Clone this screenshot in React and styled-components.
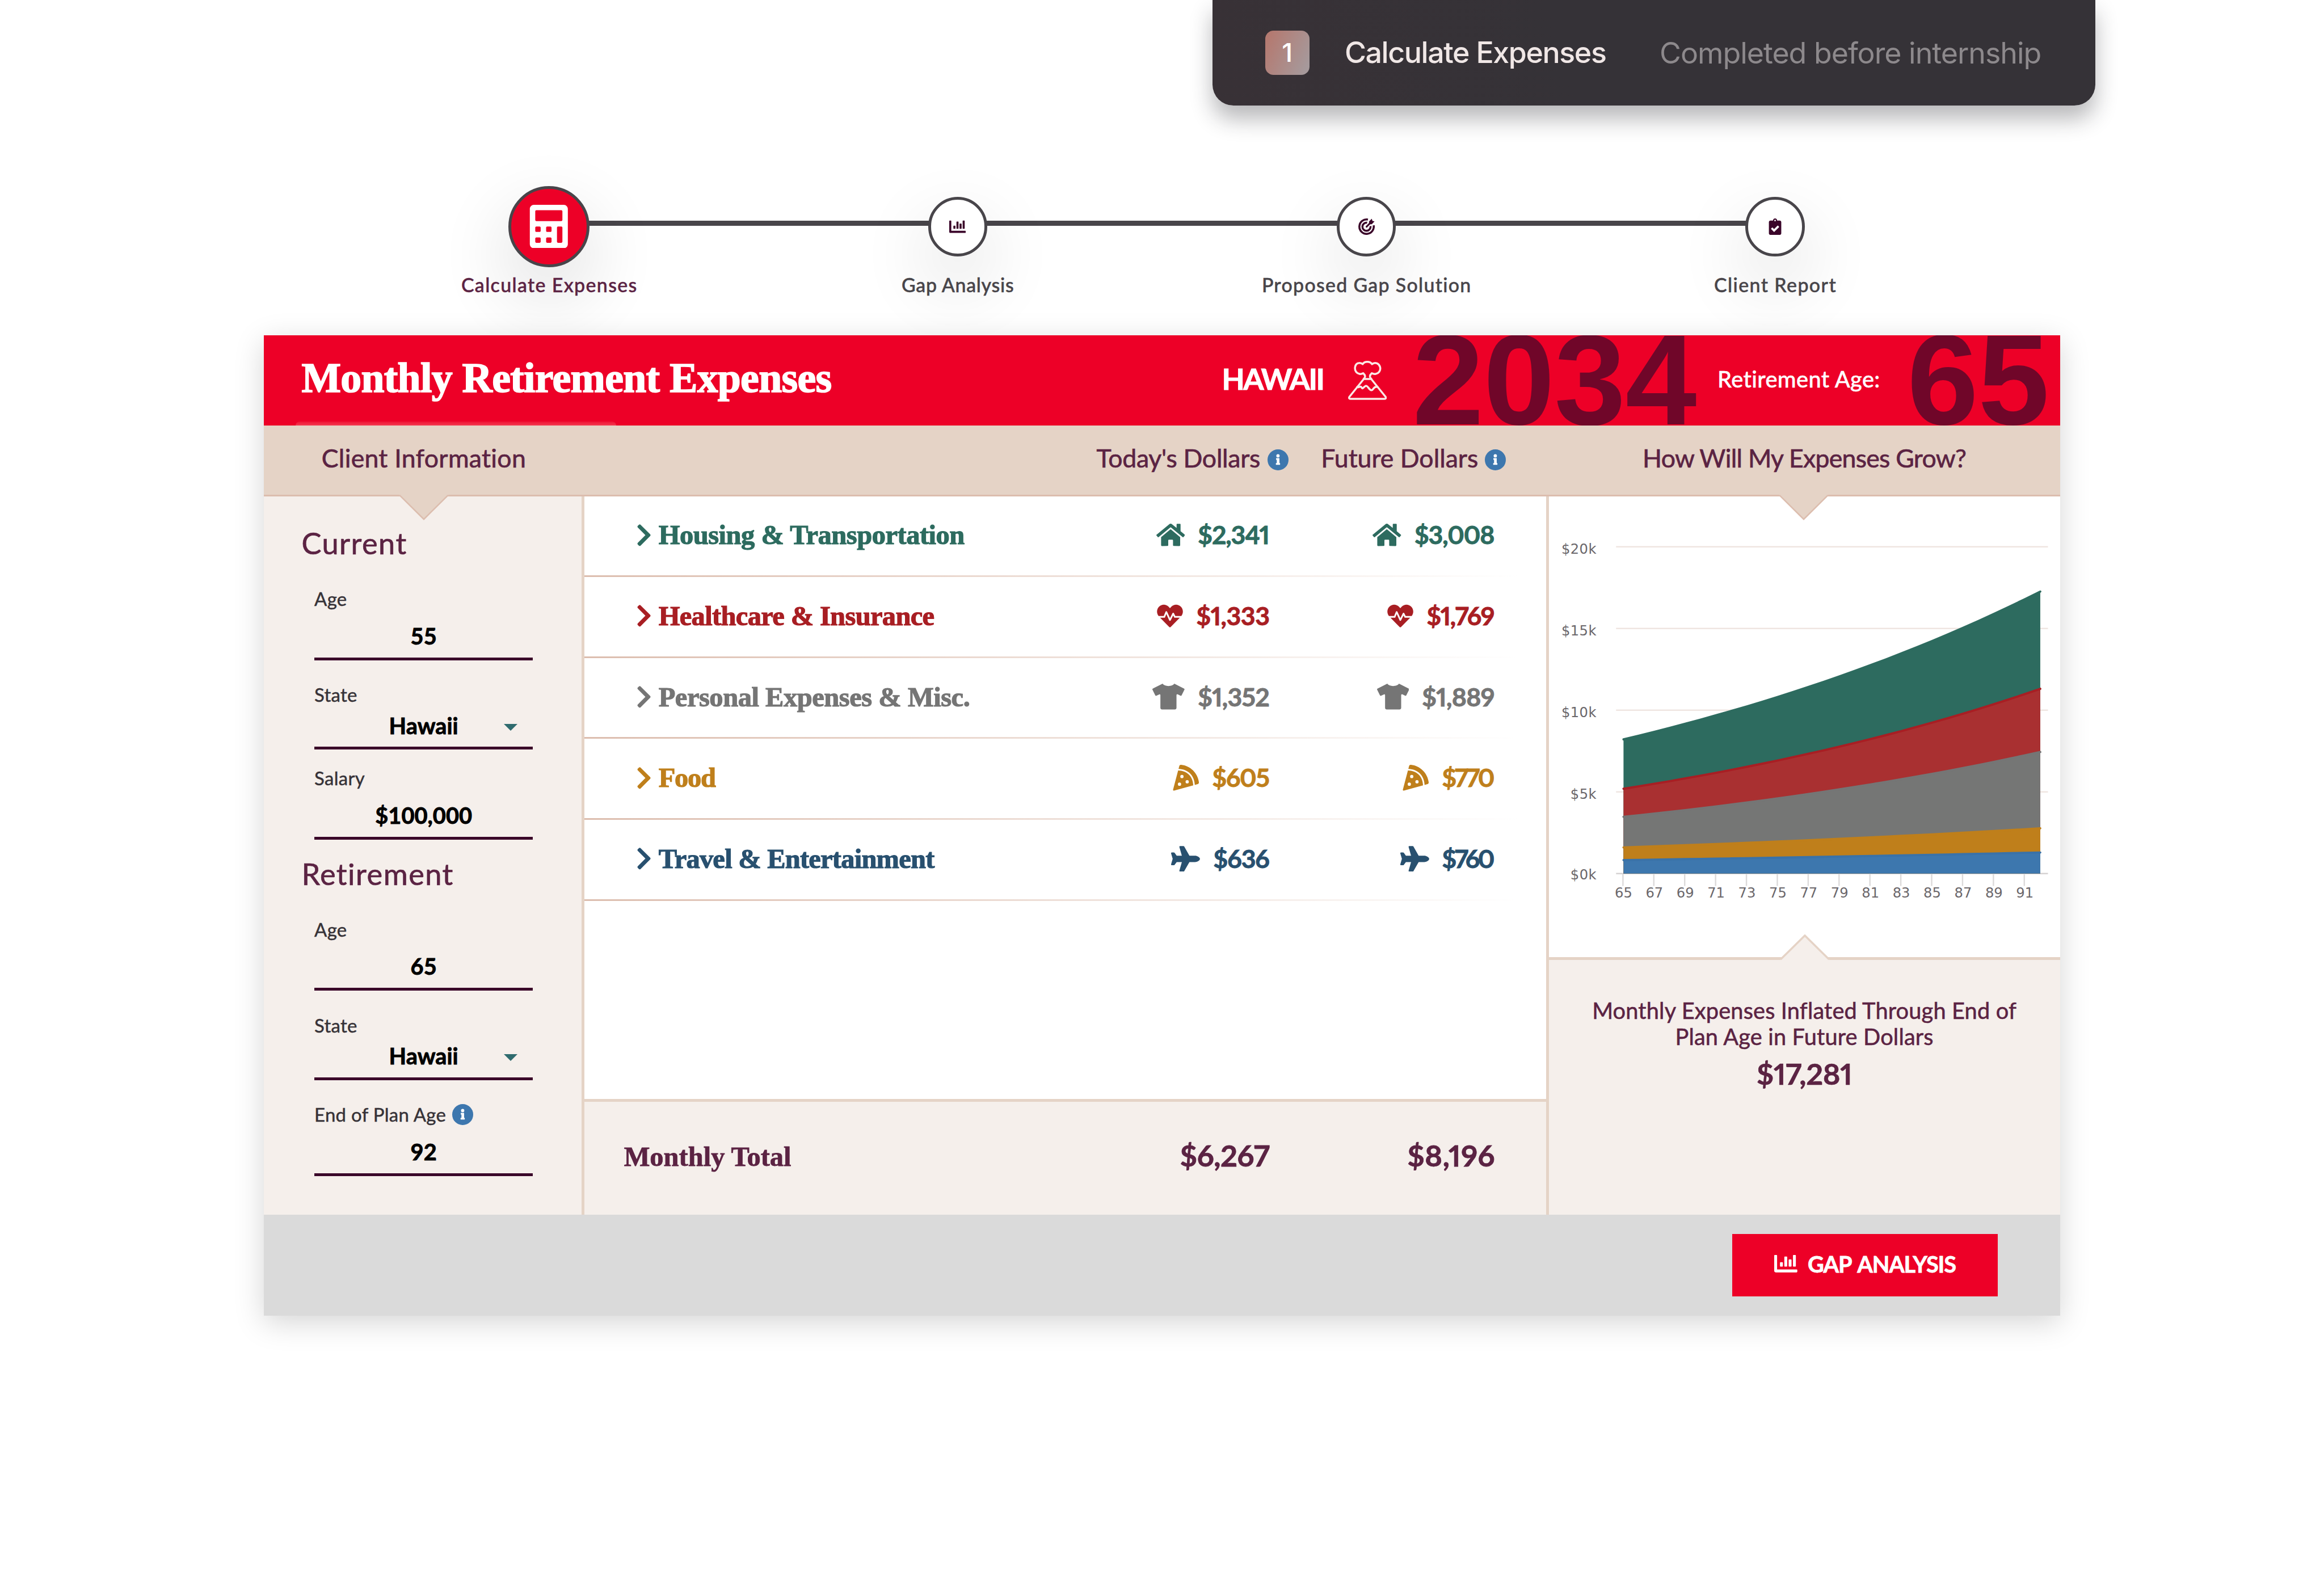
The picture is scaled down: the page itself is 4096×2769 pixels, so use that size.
import React from 'react'
import styled, { createGlobalStyle, css } from 'styled-components'
import {
  FaCalculator,
  FaChartBar,
  FaChevronRight,
  FaClipboardCheck,
  FaHeartbeat,
  FaHome,
  FaPizzaSlice,
  FaPlane,
  FaTshirt
} from 'react-icons/fa'

const colors = {
  red: '#ed0027',
  plum: '#5b2343',
  darkPlum: '#3a0529',
  gray: '#48454a',
  text: '#363237',
  sand: '#e5d3c6',
  sandDark: '#dcbdae',
  cream: '#f5efeb',
  info: '#3d77ae',
  housing: '#2d6b5f',
  health: '#a81e23',
  personal: '#757575',
  food: '#bf7f1b',
  travel: '#28506f'
}

const GlobalStyle = createGlobalStyle`
  * {
    margin: 0;
    padding: 0;
    box-sizing: border-box;
  }

  html {
    font-size: calc(100vw / 422.4);
  }

  body {
    height: 100vh;
    overflow: hidden;
    background-color: #fff;
    font-family: Lato, 'Liberation Sans', sans-serif;
  }

  svg {
    display: block;
    flex-shrink: 0;
  }
`

const serif = css`
  font-family: 'Liberation Serif', serif;
  font-weight: 700;
  white-space: nowrap;
`

// tracking is trimmed from the end so the last glyph stays on the edge
const tracked = css`
  letter-spacing: ${props => props.$tracking || 0}rem;
  margin-right: ${props => -(props.$tracking || 0)}rem;
`

/* Banner */

const Banner = styled.header`
  width: 160.5rem;
  height: 19.2rem;
  margin-left: 220.35rem;
  padding-left: 9.6rem;

  display: flex;
  align-items: center;

  border-radius: 0 0 3.8rem 3.8rem;
  background: linear-gradient(75deg, #383136, #353237 40%);
  box-shadow: 0 2.4rem 4rem rgba(30, 30, 36, 0.31);

  font-family: Inter, sans-serif;
  font-size: 5.35rem;
  white-space: nowrap;
`

Banner.Number = styled.span`
  width: 8.05rem;
  height: 8rem;
  margin-right: 6.4rem;

  border-radius: 1.5rem;
  background: linear-gradient(115deg, #b47a71 10%, #a6999b 90%);
  color: #fff;

  font-size: 4.7rem;
  font-weight: 500;
  line-height: 8rem;
  text-align: center;
`

Banner.Title = styled.h1`
  width: 57.25rem;
  padding-bottom: 0.2rem;

  color: #f0e7e6;
  font-size: inherit;
  font-weight: 500;
  letter-spacing: -0.145rem;
`

Banner.Note = styled.span`
  color: #8d898c;
  letter-spacing: -0.104rem;
`

/* Stepper */

const Stepper = styled.ol`
  width: 297.1rem;
  margin: 14.6rem 0 0 62.65rem;

  display: grid;
  grid-template-columns: repeat(4, 1fr);

  list-style: none;
`

const Step = styled.li`
  position: relative;

  display: flex;
  flex-direction: column;
  align-items: center;

  &:not(:last-child)::after {
    content: '';
    position: absolute;
    top: 6.3rem;
    left: 50%;
    width: 100%;
    height: 0.97rem;
    background-color: ${colors.gray};
  }
`

Step.Holder = styled.div`
  position: relative;
  z-index: 1;
  height: 14.73rem;

  display: flex;
  align-items: center;
`

Step.Circle = styled.div`
  width: ${props => (props.$active ? 14.73 : 10.8)}rem;
  height: ${props => (props.$active ? 14.73 : 10.8)}rem;

  display: flex;
  justify-content: center;
  align-items: center;

  border: 5px solid ${colors.gray};
  border-radius: 50%;
  background-color: ${props => (props.$active ? colors.red : '#fff')};
  box-shadow: 0 5rem 12rem 2rem
    rgba(0, 0, 0, ${props => (props.$active ? 0.09 : 0.08)});

  color: ${props => (props.$active ? '#fff' : colors.darkPlum)};
  font-size: ${props => (props.$active ? 7.9 : 3)}rem;
`

Step.Label = styled.span`
  position: relative;
  z-index: 1;
  margin-top: 1.18rem;

  color: ${props => (props.$active ? colors.plum : colors.gray)};
  font-size: 3.5rem;
  font-weight: 500;
  line-height: 4.2rem;
  white-space: nowrap;
  -webkit-text-stroke: 0.05rem;
  ${tracked}
`

/* Card */

const Card = styled.main`
  width: 326.4rem;
  height: 178.2rem;
  margin: 7.03rem 0 0 48rem;

  display: flex;
  flex-direction: column;

  position: relative;
  z-index: 2;
  box-shadow: 0 1.2rem 5rem rgba(0, 0, 0, 0.17);
`

const Header = styled.div`
  position: relative;
  height: 16.38rem;
  padding-left: 6.8rem;
  overflow: hidden;

  display: flex;
  align-items: center;

  background-color: ${colors.red};
  color: #fff;
  white-space: nowrap;

  &::after {
    content: '';
    position: absolute;
    left: 5.7rem;
    bottom: 0;
    width: 58.3rem;
    height: 0.7rem;
    border-radius: 1rem 1rem 0 0;
    background: linear-gradient(to top, #f4394f, #ee1234);
  }
`

Header.Title = styled.h2`
  ${serif}
  width: 167.27rem;
  padding-bottom: 0.8rem;
  font-size: 7.6rem;
  letter-spacing: -0.07rem;
  -webkit-text-stroke: 0.18rem;
`

Header.State = styled.strong`
  width: 22.92rem;
  padding-bottom: 0.7rem;
  font-size: 5.4rem;
  font-weight: 700;
  letter-spacing: -0.26rem;
  -webkit-text-stroke: 0.1rem;
`

Header.Number = styled.span`
  width: ${props => props.$width}rem;
  margin-left: ${props => props.$gap}rem;

  color: #700629;
  font-family: 'Liberation Sans', sans-serif;
  font-size: 23.3rem;
  font-weight: 700;
  line-height: 16.38rem;
  letter-spacing: -0.06rem;
`

Header.Label = styled.span`
  width: 34.46rem;
  margin-left: 3.64rem;
  padding-bottom: 0.6rem;
  font-size: 4.1rem;
  font-weight: 500;
  letter-spacing: 0.038rem;
  -webkit-text-stroke: 0.05rem;
`

const columns = css`
  display: grid;
  grid-template-columns: 58.2rem 175.3rem 92.9rem;
`

const TitleBar = styled.div`
  ${columns}
  position: relative;
  z-index: 1;
  height: 12.87rem;

  border-bottom: 3px solid ${colors.sandDark};
  background-color: ${colors.sand};
`

TitleBar.Cell = styled.div`
  position: relative;
  padding: 0 0 0.9rem ${props => props.$pad || 0}rem;

  display: flex;
  align-items: center;
  justify-content: ${props => (props.$center ? 'center' : 'flex-start')};
`

TitleBar.Text = styled.span`
  margin-left: ${props => props.$gap || 0}rem;

  color: ${colors.plum};
  font-size: 4.6rem;
  letter-spacing: ${props => props.$tracking || 0}rem;
  white-space: nowrap;
  -webkit-text-stroke: 0.07rem;
`

const Pointer = styled.svg`
  position: absolute;
  left: ${props => props.$left};
  top: ${props => (props.$up ? '-4.7rem' : '12.5rem')};
  width: 9.2rem;
  height: 4.8rem;
  transform: translateX(-50%);
`

const InfoDot = styled.span`
  width: 3.8rem;
  height: 3.8rem;
  margin-top: ${props => props.$drop || 0}rem;
  margin-left: ${props => props.$gap}rem;
  flex-shrink: 0;

  border-radius: 50%;
  background-color: ${colors.info};
  color: #fff;

  svg {
    width: 100%;
    height: 100%;
  }
`

const Content = styled.div`
  ${columns}
  flex: 1;
`

/* Client form */

const Sidebar = styled.aside`
  padding: 5.56rem 0 0 6.8rem;

  border-right: 5px solid ${colors.sand};
  background-color: ${colors.cream};
`

Sidebar.Heading = styled.h3`
  margin: ${props => props.$gap || 0}rem 0 5.08rem;

  color: ${colors.plum};
  font-size: 5.4rem;
  font-weight: 400;
  line-height: 6rem;
  letter-spacing: 0.15rem;
  -webkit-text-stroke: 0.07rem;
`

const Field = styled.div`
  position: relative;
  width: 39.72rem;
  margin: ${props => props.$gap || 0}rem 0 0 2.34rem;
`

Field.Label = styled.label`
  height: 4rem;
  margin-bottom: ${props => (props.$tight ? -0.29 : 0.86)}rem;

  display: flex;
  align-items: center;

  color: ${colors.text};
  font-size: 3.4rem;
  letter-spacing: 0.03rem;
  -webkit-text-stroke: 0.05rem;
`

Field.Value = styled.div`
  border-bottom: 5px solid ${colors.darkPlum};

  color: #000;
  font-size: 4.1rem;
  font-weight: 700;
  line-height: 7.8rem;
  text-align: center;
  -webkit-text-stroke: 0.09rem;
`

Field.Caret = styled.span`
  position: absolute;
  right: 2.77rem;
  bottom: 3.5rem;

  border: 12px solid transparent;
  border-top-color: #2f6b6e;
  border-bottom: 0;
`

/* Expenses */

const Expenses = styled.section`
  display: flex;
  flex-direction: column;

  border-right: 5px solid ${colors.sand};
  background-color: #fff;
`

const expenseColumns = css`
  display: grid;
  grid-template-columns: 1fr 40rem 40.9rem;
  align-items: center;
  padding-right: 9.3rem;
`

const Row = styled.div`
  ${expenseColumns}
  height: 14.71rem;
  padding-bottom: 0.6rem;
  padding-left: 9.3rem;

  background: linear-gradient(to right, ${colors.sandDark}, #fff 97%) bottom /
    100% 3px no-repeat;
  color: ${props => props.$color};
`

Row.Name = styled.div`
  ${serif}
  display: flex;
  align-items: center;

  font-size: 5rem;
  letter-spacing: ${props => props.$tracking}rem;
  -webkit-text-stroke: 0.12rem;

  svg {
    width: 3.1rem;
    height: 4.6rem;
    margin-right: 1.1rem;
  }
`

Row.Amount = styled.div`
  display: flex;
  justify-content: flex-end;
  align-items: center;

  font-size: 4.6rem;
  font-weight: 700;

  svg {
    width: ${props => props.$iconWidth}rem;
    height: 4.7rem;
    margin-right: 2.35rem;
  }
`

Row.Figure = styled.span`
  position: relative;
  top: -0.1rem;
  font-variant-numeric: proportional-nums;
  -webkit-text-stroke: 0.09rem;
  ${tracked}
`

const Total = styled.div`
  ${expenseColumns}
  height: 21.1rem;
  margin-top: auto;
  padding-left: 7.2rem;
  padding-bottom: 0.7rem;

  border-top: 5px solid ${colors.sand};
  background-color: ${colors.cream};
  color: ${colors.plum};
`

Total.Label = styled.strong`
  ${serif}
  font-size: 5rem;
  -webkit-text-stroke: 0.08rem;
`

Total.Figure = styled.strong`
  justify-self: end;
  padding-bottom: 0.5rem;
  font-size: 5.4rem;
  font-variant-numeric: proportional-nums;
  -webkit-text-stroke: 0.08rem;
  ${tracked}
`

/* Growth */

const Growth = styled.section`
  display: flex;
  flex-direction: column;
`

const Chart = styled.svg`
  width: 92.9rem;
  height: 83.8rem;
  background-color: #fff;

  text {
    fill: #6b676b;
    font: 25px 'DejaVu Sans', sans-serif;
  }
`

const Inflated = styled.div`
  position: relative;
  flex: 1;
  padding-top: 6.75rem;

  border-top: 5px solid ${colors.sand};
  background-color: ${colors.cream};
  color: ${colors.plum};

  font-size: 4.1rem;
  line-height: 4.83rem;
  letter-spacing: 0.016rem;
  text-align: center;
  -webkit-text-stroke: 0.06rem;
`

Inflated.Total = styled.strong`
  display: block;
  margin-top: 1.2rem;
  font-size: 5.4rem;
  font-variant-numeric: proportional-nums;
  line-height: 6rem;
  letter-spacing: -0.04rem;
`

const Footer = styled.footer`
  height: 18.32rem;
  padding-right: 11.33rem;

  display: flex;
  justify-content: flex-end;
  align-items: center;

  background-color: #dadada;
`

const Button = styled.button`
  width: 48.22rem;
  height: 11.34rem;
  margin-bottom: 0.1rem;
  padding-bottom: 0.5rem;

  display: flex;
  justify-content: center;
  align-items: center;
  gap: 1.9rem;

  border: 0;
  background-color: ${colors.red};
  color: #fff;

  font-family: inherit;
  font-size: 4.1rem;
  font-weight: 700;
  letter-spacing: -0.12rem;
  word-spacing: 0.4rem;
  white-space: nowrap;
  -webkit-text-stroke: 0.08rem;

  svg {
    width: 4.2rem;
    height: 4.2rem;
  }
`

const TargetIcon = () => (
  <svg width="1em" height="1em" viewBox="0 0 30 30" fill="none">
    <path
      d="M17.5 2.1A13.1 13.1 0 1 0 27.9 12.5"
      stroke="currentColor"
      strokeWidth="3.6"
    />
    <path
      d="M16 7.8A7.4 7.4 0 1 0 22.2 14"
      stroke="currentColor"
      strokeWidth="3.6"
    />
    <path d="M15 15l7-7" stroke="currentColor" strokeWidth="3.2" strokeLinecap="round" />
    <path d="M19.5 9.8V5.5L24.5 0.5L25.6 4.4L29.5 5.5L24.5 10.5H20.2Z" fill="currentColor" />
  </svg>
)

const VolcanoIcon = () => (
  <svg
    width="7.04rem"
    height="7.1rem"
    viewBox="0 0 70.4 71"
    fill="none"
    stroke="#fbe9e6"
    strokeWidth="3.6"
    strokeLinecap="round"
    strokeLinejoin="round"
  >
    <path d="M28.5 32.5C32 30 31.5 26 27.5 22.5C23.5 25 17.5 24 14.5 20C10.5 14 13 5.5 18.5 4.2C21.5 3.4 24.5 4 26.5 6C28.5 2.5 32 1.7 35 1.7C38.5 1.7 41.5 3 43.5 6C46 3.8 49.5 3.4 52.5 4.5C58 7 60.5 14.5 56.5 20C53.5 24 47.5 25 43 22.5C39 26 38.5 30 42 32.5" />
    <path d="M28.5 33H42L68.2 65.5C69.3 67.5 68.5 69.2 66.5 69.2H4C2 69.2 1.2 67.5 2.3 65.5Z" />
    <path d="M16.5 47.5C19 49.5 22.5 44.5 24.5 48.5C26.5 53 30 45 33 45.5C36.5 46 38 53 42.5 53.5C46 53.5 46 45.5 53.5 47.5" />
  </svg>
)

const InfoIcon = () => (
  <svg viewBox="0 0 38 38" fill="currentColor">
    <circle cx="19" cy="11.8" r="3" />
    <path d="M15.6 16h6v9h1.2v3.2h-7.6v-3.2h1.6v-5.8h-1.2z" />
  </svg>
)

const PointerDown = ({ left }) => (
  <Pointer viewBox="0 0 92 48" $left={left}>
    <path d="M0 0L46 45.5L92 0Z" fill={colors.sand} />
    <path d="M2 2L46 45.5L90 2" fill="none" stroke={colors.sandDark} strokeWidth="2.6" />
  </Pointer>
)

const PointerUp = ({ left }) => (
  <Pointer viewBox="0 0 92 48" $left={left} $up>
    <path d="M0 48L46 2L92 48Z" fill={colors.cream} />
    <path d="M2 45.5L46 2L90 45.5" fill="none" stroke={colors.sand} strokeWidth="3.6" />
  </Pointer>
)

const steps = [
  { label: 'Calculate Expenses', icon: FaCalculator, active: true, tracking: 0.139 },
  { label: 'Gap Analysis', icon: FaChartBar, tracking: 0.07 },
  { label: 'Proposed Gap Solution', icon: TargetIcon, tracking: 0.132 },
  { label: 'Client Report', icon: FaClipboardCheck, tracking: 0.145 }
]

// amounts are [value, tracking]
const expenses = [
  {
    name: 'Housing & Transportation',
    tracking: -0.048,
    color: colors.housing,
    icon: FaHome,
    iconWidth: 5.2,
    today: ['$2,341', -0.12],
    future: ['$3,008', -0.12]
  },
  {
    name: 'Healthcare & Insurance',
    tracking: -0.066,
    color: colors.health,
    icon: FaHeartbeat,
    iconWidth: 4.75,
    today: ['$1,333', -0.05],
    future: ['$1,769', -0.15]
  },
  {
    name: 'Personal Expenses & Misc.',
    tracking: -0.047,
    color: colors.personal,
    icon: FaTshirt,
    iconWidth: 5.85,
    today: ['$1,352', -0.075],
    future: ['$1,889', -0.075]
  },
  {
    name: 'Food',
    tracking: -0.13,
    color: colors.food,
    icon: FaPizzaSlice,
    iconWidth: 4.8,
    today: ['$605', -0.14],
    future: ['$770', -0.36]
  },
  {
    name: 'Travel & Entertainment',
    tracking: -0.078,
    color: colors.travel,
    icon: FaPlane,
    iconWidth: 5.25,
    today: ['$636', -0.11],
    future: ['$760', -0.36]
  }
]

// stacked monthly totals at the first and the last age
const series = [
  { from: 8212, to: 17260, fill: '#2d6b5f', stroke: '#2d6b5f' },
  { from: 5189, to: 11306, fill: '#a93031', stroke: '#a81e23' },
  { from: 3471, to: 7441, fill: '#757675', stroke: '#757575' },
  { from: 1599, to: 2768, fill: '#bf7f1b', stroke: '#bf7f1b' },
  { from: 825, to: 1290, fill: '#3d77ae', stroke: '#3a72a8' }
]

const START_AGE = 65
const END_AGE = 92
const PLOT = { left: 135.5, right: 893, bottom: 685.5, perThousand: 29.7 }

const ageToX = age =>
  PLOT.left + ((age - START_AGE) / (END_AGE - START_AGE)) * (PLOT.right - PLOT.left)

const dollarsToY = value => PLOT.bottom - (value / 1000) * PLOT.perThousand

const linePoints = ({ from, to }) => {
  const points = []
  for (let age = START_AGE; age <= END_AGE; age++) {
    const value = from * (to / from) ** ((age - START_AGE) / (END_AGE - START_AGE))
    points.push(`${ageToX(age).toFixed(1)},${dollarsToY(value).toFixed(1)}`)
  }
  return points.join(' ')
}

const ages = Array.from({ length: 14 }, (_, i) => START_AGE + i * 2)

const GrowthChart = () => (
  <Chart viewBox="0 0 929 838">
    {[20, 15, 10, 5, 0].map(tick => (
      <g key={tick}>
        <path
          d={`M122 ${dollarsToY(tick * 1000)}H907`}
          stroke={tick ? '#efe5e1' : '#d5d2d2'}
          strokeWidth="2.7"
        />
        <text
          x="86.5"
          y={dollarsToY(tick * 1000) + (tick ? 13 : 10.5)}
          textAnchor="end"
          letterSpacing="0.4"
        >
          ${tick}k
        </text>
      </g>
    ))}
    {series.map(item => (
      <g key={item.fill}>
        <polygon
          points={`${PLOT.left},${PLOT.bottom} ${linePoints(item)} ${PLOT.right},${PLOT.bottom}`}
          fill={item.fill}
        />
        <polyline
          points={linePoints(item)}
          fill="none"
          stroke={item.stroke}
          strokeWidth="4"
          strokeLinecap="round"
        />
      </g>
    ))}
    {ages.map(age => (
      <g key={age}>
        <path d={`M${ageToX(age) - 1} 686v22`} stroke="#dcdada" strokeWidth="2.5" />
        <text x={ageToX(age)} y="729.5" textAnchor="middle">
          {age}
        </text>
      </g>
    ))}
  </Chart>
)

const Info = ({ gap, drop }) => (
  <InfoDot $gap={gap} $drop={drop}>
    <InfoIcon />
  </InfoDot>
)

const Input = ({ label, value, gap, select, info }) => (
  <Field $gap={gap}>
    <Field.Label $tight={select}>
      {label}
      {info && <Info gap={1.1} />}
    </Field.Label>
    <Field.Value>{value}</Field.Value>
    {select && <Field.Caret />}
  </Field>
)

const Amount = ({ icon: Icon, iconWidth, amount }) => (
  <Row.Amount $iconWidth={iconWidth}>
    <Icon />
    <Row.Figure $tracking={amount[1]}>{amount[0]}</Row.Figure>
  </Row.Amount>
)

const App = () => {
  return (
    <>
      <GlobalStyle />

      <Banner>
        <Banner.Number>1</Banner.Number>
        <Banner.Title>Calculate Expenses</Banner.Title>
        <Banner.Note>Completed before internship</Banner.Note>
      </Banner>

      <Stepper>
        {steps.map(({ label, icon: Icon, active, tracking }) => (
          <Step key={label}>
            <Step.Holder>
              <Step.Circle $active={active}>
                <Icon />
              </Step.Circle>
            </Step.Holder>
            <Step.Label $active={active} $tracking={tracking}>
              {label}
            </Step.Label>
          </Step>
        ))}
      </Stepper>

      <Card>
        <Header>
          <Header.Title>Monthly Retirement Expenses</Header.Title>
          <Header.State>HAWAII</Header.State>
          <VolcanoIcon />
          <Header.Number $width={51.8} $gap={4.7}>
            2034
          </Header.Number>
          <Header.Label>Retirement Age:</Header.Label>
          <Header.Number $width={25.9} $gap={0}>
            65
          </Header.Number>
        </Header>

        <TitleBar>
          <TitleBar.Cell $pad={10.45}>
            <TitleBar.Text $tracking={0.03}>Client Information</TitleBar.Text>
            <PointerDown left="29rem" />
          </TitleBar.Cell>
          <TitleBar.Cell $pad={93.1}>
            <TitleBar.Text $tracking={-0.029}>Today's Dollars</TitleBar.Text>
            <Info gap={1.3} drop={0.9} />
            <TitleBar.Text $gap={5.95}>Future Dollars</TitleBar.Text>
            <Info gap={1.25} drop={0.9} />
          </TitleBar.Cell>
          <TitleBar.Cell $center>
            <TitleBar.Text $tracking={-0.075}>How Will My Expenses Grow?</TitleBar.Text>
            <PointerDown left="46.3rem" />
          </TitleBar.Cell>
        </TitleBar>

        <Content>
          <Sidebar>
            <Sidebar.Heading>Current</Sidebar.Heading>
            <Input label="Age" value="55" />
            <Input label="State" value="Hawaii" gap={4.25} select />
            <Input label="Salary" value="$100,000" gap={3.14} />
            <Sidebar.Heading $gap={3.21}>Retirement</Sidebar.Heading>
            <Input label="Age" value="65" />
            <Input label="State" value="Hawaii" gap={4.25} select />
            <Input label="End of Plan Age" value="92" gap={4.25} info />
          </Sidebar>

          <Expenses>
            {expenses.map(item => (
              <Row key={item.name} $color={item.color}>
                <Row.Name $tracking={item.tracking}>
                  <FaChevronRight />
                  {item.name}
                </Row.Name>
                <Amount icon={item.icon} iconWidth={item.iconWidth} amount={item.today} />
                <Amount icon={item.icon} iconWidth={item.iconWidth} amount={item.future} />
              </Row>
            ))}
            <Total>
              <Total.Label>Monthly Total</Total.Label>
              <Total.Figure $tracking={-0.05}>$6,267</Total.Figure>
              <Total.Figure $tracking={0.05}>$8,196</Total.Figure>
            </Total>
          </Expenses>

          <Growth>
            <GrowthChart />
            <Inflated>
              <PointerUp left="46.55rem" />
              Monthly Expenses Inflated Through End of
              <br />
              Plan Age in Future Dollars
              <Inflated.Total>$17,281</Inflated.Total>
            </Inflated>
          </Growth>
        </Content>

        <Footer>
          <Button>
            <FaChartBar />
            GAP ANALYSIS
          </Button>
        </Footer>
      </Card>
    </>
  )
}

export default App
